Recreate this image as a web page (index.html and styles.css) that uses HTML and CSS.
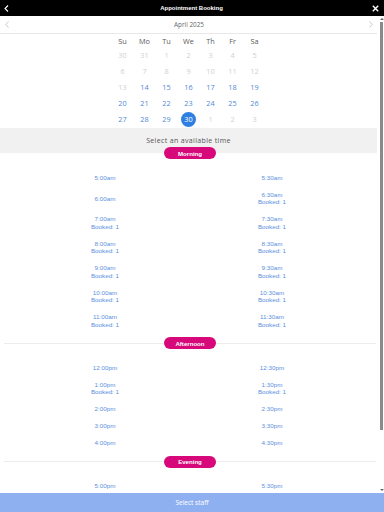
FILE: index.html
```html
<!DOCTYPE html>
<html lang="en">
<head>
<meta charset="utf-8">
<title>Appointment Booking</title>
<link rel="stylesheet" href="styles.css">
</head>
<body>
<div class="app">
  <header class="topbar">
    <svg class="topbar-back" width="5" height="7" viewBox="0 0 5 7"><path d="M4 0.5 L1 3.5 L4 6.5" fill="none" stroke="#fff" stroke-width="1.1"/></svg>
    <span class="topbar-title">Appointment Booking</span>
    <svg class="topbar-close" width="7" height="7" viewBox="0 0 7 7"><path d="M0.8 0.8 L6.2 6.2 M6.2 0.8 L0.8 6.2" fill="none" stroke="#fff" stroke-width="1.4"/></svg>
  </header>
  <div class="viewport">
    <main class="scroll">
      <div class="monthbar">
        <svg class="month-prev" width="4" height="7" viewBox="0 0 4 7"><path d="M3.5 0.5 L0.8 3.5 L3.5 6.5" fill="none" stroke="#bbb" stroke-width="0.8"/></svg>
        <span class="month-label">April 2025</span>
        <svg class="month-next" width="4" height="7" viewBox="0 0 4 7"><path d="M0.5 0.5 L3.2 3.5 L0.5 6.5" fill="none" stroke="#bbb" stroke-width="0.8"/></svg>
      </div>
      <div class="cal">
        <span class="wd">Su</span><span class="wd">Mo</span><span class="wd">Tu</span><span class="wd">We</span><span class="wd">Th</span><span class="wd">Fr</span><span class="wd">Sa</span>
        <span class="day off">30</span><span class="day off">31</span><span class="day off">1</span><span class="day off">2</span><span class="day off">3</span><span class="day off">4</span><span class="day off">5</span>
        <span class="day off">6</span><span class="day off">7</span><span class="day off">8</span><span class="day off">9</span><span class="day off">10</span><span class="day off">11</span><span class="day off">12</span>
        <span class="day off">13</span><span class="day">14</span><span class="day">15</span><span class="day">16</span><span class="day">17</span><span class="day">18</span><span class="day">19</span>
        <span class="day">20</span><span class="day">21</span><span class="day">22</span><span class="day">23</span><span class="day">24</span><span class="day">25</span><span class="day">26</span>
        <span class="day">27</span><span class="day">28</span><span class="day">29</span><span class="day sel"><span class="sel-dot">30</span></span><span class="day off">1</span><span class="day off">2</span><span class="day off">3</span>
      </div>
      <div class="prompt">Select an available time</div>

      <section class="period period-first">
        <div class="period-head"><span class="pill">Morning</span></div>
        <div class="slots">
          <div class="slot"><span>5:00am</span></div>
          <div class="slot"><span>5:30am</span></div>
          <div class="slot"><span>6:00am</span></div>
          <div class="slot"><span>6:30am</span><span>Booked: 1</span></div>
          <div class="slot"><span>7:00am</span><span>Booked: 1</span></div>
          <div class="slot"><span>7:30am</span><span>Booked: 1</span></div>
          <div class="slot"><span>8:00am</span><span>Booked: 1</span></div>
          <div class="slot"><span>8:30am</span><span>Booked: 1</span></div>
          <div class="slot"><span>9:00am</span><span>Booked: 1</span></div>
          <div class="slot"><span>9:30am</span><span>Booked: 1</span></div>
          <div class="slot"><span>10:00am</span><span>Booked: 1</span></div>
          <div class="slot"><span>10:30am</span><span>Booked: 1</span></div>
          <div class="slot"><span>11:00am</span><span>Booked: 1</span></div>
          <div class="slot"><span>11:30am</span><span>Booked: 1</span></div>
        </div>
      </section>

      <section class="period">
        <div class="period-head"><span class="pill">Afternoon</span></div>
        <div class="slots">
          <div class="slot"><span>12:00pm</span></div>
          <div class="slot"><span>12:30pm</span></div>
          <div class="slot"><span>1:00pm</span><span>Booked: 1</span></div>
          <div class="slot"><span>1:30pm</span><span>Booked: 1</span></div>
          <div class="slot"><span>2:00pm</span></div>
          <div class="slot"><span>2:30pm</span></div>
          <div class="slot"><span>3:00pm</span></div>
          <div class="slot"><span>3:30pm</span></div>
          <div class="slot"><span>4:00pm</span></div>
          <div class="slot"><span>4:30pm</span></div>
        </div>
      </section>

      <section class="period period-last">
        <div class="period-head"><span class="pill">Evening</span></div>
        <div class="slots">
          <div class="slot"><span>5:00pm</span></div>
          <div class="slot"><span>5:30pm</span></div>
        </div>
      </section>
    </main>
    <div class="vbar" aria-hidden="true">
      <span class="vbar-up"></span>
      <span class="vbar-track"><span class="vbar-thumb"></span></span>
      <span class="vbar-down"></span>
    </div>
  </div>
  <button class="cta">Select staff</button>
</div>
</body>
</html>
```
FILE: styles.css
```css
html, body {
  margin: 0;
  padding: 0;
  background: #fff;
}

.app {
  width: 384px;
  height: 512px;
  display: flex;
  flex-direction: column;
  overflow: hidden;
}

/* top bar */
.topbar {
  height: 16px;
  flex: 0 0 16px;
  background: #000;
  display: grid;
  grid-template-columns: 1fr auto 1fr;
  align-items: center;
  padding: 0 5px 0 4px;
}
.topbar-back { justify-self: start; display: block; }
.topbar-close { justify-self: end; display: block; }
.topbar-title {
  color: #fff;
  font-family: "Liberation Sans", Arial, sans-serif;
  font-weight: bold;
  font-size: 6px;
  line-height: 8px;
}

/* viewport: scrolling content + scrollbar */
.viewport {
  flex: 1 1 auto;
  min-height: 0;
  display: flex;
}
.scroll {
  flex: 1 1 auto;
  min-width: 0;
  overflow: hidden;
  background: #fff;
}
.vbar {
  flex: 0 0 7px;
  display: flex;
  flex-direction: column;
  background: #fff;
}
.vbar-up,
.vbar-down {
  flex: 0 0 6px;
  display: flex;
  align-items: center;
  justify-content: center;
  padding-left: 2px;
}
.vbar-up::before,
.vbar-down::before {
  content: "";
  width: 0;
  height: 0;
  border-left: 2px solid transparent;
  border-right: 2px solid transparent;
}
.vbar-up::before { border-bottom: 2.5px solid #666; }
.vbar-down::before { border-top: 2.5px solid #666; }
.vbar-track {
  flex: 1 1 auto;
  display: flex;
  padding: 0 1px 0 3px;
}
.vbar-thumb {
  width: 3px;
  height: 408px;
  background: #8a8a8a;
}

/* month bar */
.monthbar {
  height: 17px;
  border-bottom: 1px solid #e8e8e8;
  display: grid;
  grid-template-columns: 1fr auto 1fr;
  align-items: center;
  padding: 0 4px 0 5px;
}
.month-prev { justify-self: start; display: block; }
.month-next { justify-self: end; display: block; }
.month-label {
  font-family: "Open Sans", sans-serif;
  font-size: 6.4px;
  color: #666;
  line-height: 8px;
}

/* calendar */
.cal {
  display: grid;
  grid-template-columns: repeat(7, 22px);
  grid-template-rows: 13px repeat(5, 16px);
  justify-content: center;
  padding-bottom: 1px;
  font-family: "Open Sans", sans-serif;
  font-size: 7.3px;
}
.wd, .day {
  display: flex;
  align-items: center;
  justify-content: center;
}
.wd { color: #5a5a5a; }
.day { color: #4f89d8; }
.day.off { color: #d0d0d0; }
.sel-dot {
  width: 15px;
  height: 15px;
  border-radius: 50%;
  background: #2f7fe0;
  color: #fff;
  display: flex;
  align-items: center;
  justify-content: center;
}

/* prompt */
.prompt {
  height: 25px;
  background: #f1f1f1;
  display: flex;
  align-items: center;
  justify-content: center;
  font-family: "Open Sans", sans-serif;
  font-size: 7px;
  letter-spacing: 0.35px;
  color: #555;
}

/* periods */
.period-head {
  height: 12px;
  display: flex;
  align-items: center;
  padding: 0 1px 0 4px;
  margin: 4px 0 10px;
}
.period-head::before,
.period-head::after {
  content: "";
  flex: 1;
  height: 1px;
  background: #ececec;
}
.period-first .period-head {
  margin-top: -6px;
  position: relative;
}
.period-first .period-head::before,
.period-first .period-head::after {
  background: transparent;
}
.pill {
  width: 52px;
  height: 12px;
  border-radius: 6px;
  background: #d6087a;
  color: #fff;
  font-family: "Liberation Sans", Arial, sans-serif;
  font-weight: bold;
  font-size: 6.1px;
  display: flex;
  align-items: center;
  justify-content: center;
}

.slots {
  width: 334px;
  margin: 0 auto;
  display: grid;
  grid-template-columns: 1fr 1fr;
  align-items: center;
}
.slot {
  padding: 4.75px 0;
  display: flex;
  flex-direction: column;
  align-items: center;
  font-family: "Liberation Sans", Arial, sans-serif;
  font-size: 6.25px;
  line-height: 7.5px;
  color: #5a90de;
}

/* bottom button */
.cta {
  flex: 0 0 19px;
  height: 19px;
  border: 0;
  margin: 0;
  padding: 0;
  background: #8fb0f0;
  color: #fff;
  font-family: "Open Sans", sans-serif;
  font-size: 6.5px;
  width: 100%;
}
```
